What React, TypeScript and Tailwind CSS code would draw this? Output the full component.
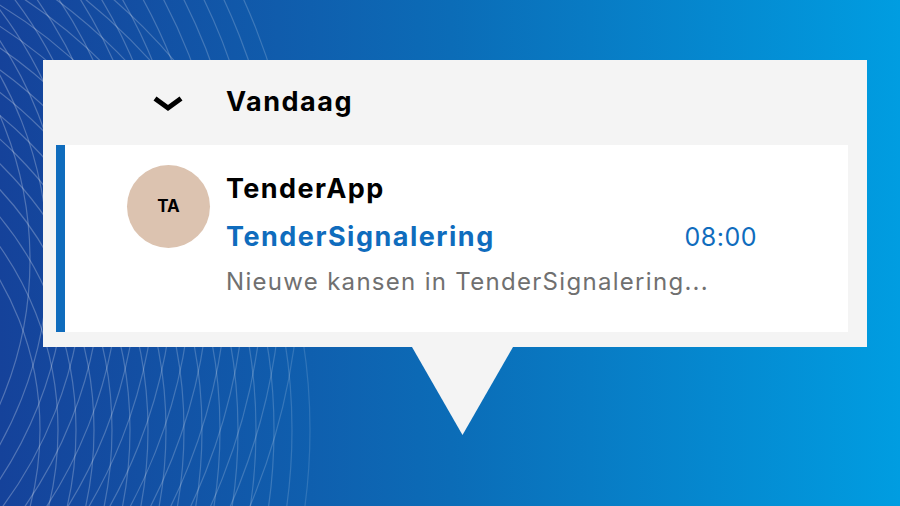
function Lines() {
  const a = Array.from({ length: 16 }, (_, i) => 360 + i * 18);
  const b = Array.from({ length: 16 }, (_, i) => 300 + i * 18);
  return (
    <svg className="absolute inset-0 pointer-events-none" width="900" height="506" viewBox="0 0 900 506">
      <defs>
        <linearGradient id="fade" gradientUnits="userSpaceOnUse" x1="0" y1="0" x2="900" y2="0">
          <stop offset="0" stopColor="#fff" stopOpacity="0.26" />
          <stop offset="0.3" stopColor="#fff" stopOpacity="0.18" />
          <stop offset="0.45" stopColor="#fff" stopOpacity="0" />
        </linearGradient>
      </defs>
      <g fill="none" stroke="url(#fade)" strokeWidth="1.2">
        {a.map((r) => (
          <circle key={'a' + r} cx={-330} cy={260} r={r} />
        ))}
        {b.map((r) => (
          <circle key={'b' + r} cx={-260} cy={430} r={r} />
        ))}
      </g>
    </svg>
  );
}

export default function App() {
  return (
    <div
      className="w-[900px] h-[506px] relative overflow-hidden bg-gradient-to-r from-[#15429a] via-[#0b6cb7] to-[#009de1]"
      style={{ fontFamily: 'Inter, "Noto Sans", sans-serif' }}
    >
      <Lines />

      <div className="relative flex flex-col pt-[60px] pl-[43px]">
        {/* Callout panel */}
        <div className="w-[824px] bg-[#f4f4f4] flex flex-col">
          <div className="h-[85px] flex items-center">
            <div className="w-[110px]" />
            <svg width="30" height="16" viewBox="0 0 30 16" className="mt-[2px]">
              <polyline points="2,2.5 15,12 28,2.5" fill="none" stroke="#000" strokeWidth="5" strokeLinejoin="miter" />
            </svg>
            <div className="w-[43px]" />
            <span className="text-[27px] font-bold text-black tracking-[1.5px]">Vandaag</span>
          </div>

          <div className="ml-[13px] mr-[19px] mb-[15px] h-[187px] bg-white flex">
            <div className="w-[9px] bg-[#0f6cbd]" />
            <div className="w-[62px]" />
            <div className="pt-[20px]">
              <div className="w-[83px] h-[83px] rounded-full bg-[#dcc3b0] flex items-center justify-center">
                <span className="text-[17px] font-bold text-black">TA</span>
              </div>
            </div>
            <div className="w-[16px]" />
            <div className="flex flex-col pt-[28px] w-[531px]">
              <span className="text-[27px] leading-[32px] font-bold text-black tracking-[1.4px]">TenderApp</span>
              <div className="flex items-baseline justify-between mt-[16px]">
                <span className="text-[27px] leading-[32px] font-bold text-[#0f6cbd] tracking-[1.5px]">
                  TenderSignalering
                </span>
                <span className="text-[25px] leading-[32px] text-[#0f6cbd] tracking-[0.5px]">08:00</span>
              </div>
              <span className="text-[24px] leading-[30px] text-[#707070] mt-[14px] tracking-[1.3px]">
                Nieuwe kansen in TenderSignalering...
              </span>
            </div>
          </div>
        </div>
        <div className="ml-[369px] w-[101px] h-[88px] bg-[#f4f4f4] [clip-path:polygon(0_0,100%_0,50%_100%)]" />
      </div>
    </div>
  );
}
